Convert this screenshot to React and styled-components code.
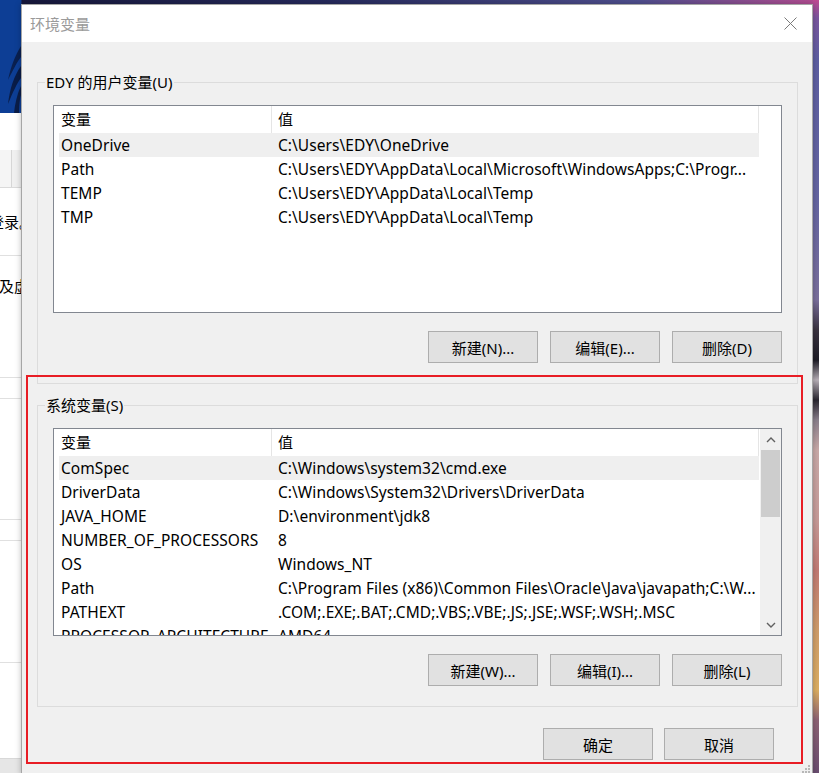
import React from 'react'
import styled, { createGlobalStyle } from 'styled-components'

const GlobalStyle = createGlobalStyle`
  html, body {
    margin: 0;
    padding: 0;
  }
  body {
    width: 819px;
    height: 773px;
    overflow: hidden;
    font-family: "Noto Sans", "Noto Sans CJK SC", sans-serif;
    font-size: 15px;
    color: #000;
  }
  * {
    box-sizing: border-box;
  }
`

const Desktop = styled.div`
  display: flex;
  width: 819px;
  height: 773px;
  overflow: hidden;
  background: linear-gradient(90deg, #0d3a8c 0px, #0d3a8c 21px, #17183c 22px, #262a5c 40%, #4f4f8e 78%, #b54d92 100%);
`

/* ---------- stuff behind the dialog ---------- */

const LeftStrip = styled.div`
  width: 21px;
  flex-shrink: 0;
  display: flex;
  flex-direction: column;
  overflow: hidden;
`

const Palm = styled.svg`
  display: block;
  flex-shrink: 0;
`

const BackWindow = styled.div`
  flex: 1;
  background: #fff;
  display: flex;
  flex-direction: column;
`

const Section = styled.div`
  height: ${p => p.h}px;
  flex-shrink: 0;
  border-bottom: ${p => (p.line ? '1px solid #e0e0e0' : 'none')};
  display: flex;
  justify-content: ${p => (p.end ? 'flex-end' : 'flex-start')};
  align-items: ${p => (p.top ? 'flex-start' : 'center')};
  padding-top: ${p => p.pt || 0}px;
  white-space: nowrap;
  line-height: 20px;
`

const TabBand = styled.div`
  height: 38px;
  flex-shrink: 0;
  background: #f0f0f0;
  border-bottom: 1px solid #dadada;
  display: flex;
`

const TabEdge = styled.div`
  width: 12px;
  border-right: 1px solid #d6d6d6;
  background: #f5f5f5;
`

const Filler = styled.div`
  flex: 1;
`

const BottomBand = styled.div`
  height: 15px;
  flex-shrink: 0;
  background: #e6e6e6;
  border-top: 1px solid #d8d8d8;
`

const Fragment = styled.span`
  margin-right: ${p => p.mr || 0}px;
  margin-left: ${p => p.ml || 0}px;
`

const RightStrip = styled.div`
  flex: 1;
  background: linear-gradient(180deg,
    #c04a92 0px, #7a569e 18px, #5d5ea2 60px, #6565a2 200px, #7a6f9c 300px,
    #3a3340 330px, #1d1c26 360px, #b8b0b8 380px, #2a2630 400px, #8a7f8c 420px,
    #c9a9a8 450px, #c79a98 520px, #c27a74 570px, #cf9c6a 630px, #dcae62 690px,
    #8d6274 720px, #6a4d70 773px);
`

/* ---------- dialog ---------- */

const Dialog = styled.div`
  position: relative;
  width: 792px;
  height: 771px;
  margin-top: 4px;
  flex-shrink: 0;
  border: 1px solid #a6a6a6;
  background: #f0f0f0;
  display: flex;
  flex-direction: column;
  box-shadow: 0 0 6px rgba(0, 0, 0, 0.25);
`

const TitleBar = styled.div`
  height: 37px;
  flex-shrink: 0;
  background: #fff;
  display: flex;
  align-items: center;
  justify-content: space-between;
  padding-left: 8px;
`

const Title = styled.span`
  color: #9a9a9a;
  font-size: 15px;
`

const CloseButton = styled.div`
  width: 44px;
  height: 100%;
  display: flex;
  align-items: center;
  justify-content: center;
`

const Body = styled.div`
  flex: 1;
  padding: 0 14px 0 15px;
  display: flex;
  flex-direction: column;
`

const Group = styled.fieldset`
  margin: ${p => p.mt}px 0 0;
  padding: 13px 15px 20px;
  border: 1px solid #dcdcdc;
  min-width: 0;
`

const Legend = styled.legend`
  margin-left: -8px;
  padding: 0 1px;
  line-height: 20px;
  font-size: 15px;
`

const ListBox = styled.div`
  height: 208px;
  border: 1px solid #828790;
  background: #fff;
  display: flex;
  overflow: hidden;
`

const ListContent = styled.div`
  flex: 1;
  padding-left: 5px;
  overflow: hidden;
`

const HeaderRow = styled.div`
  display: flex;
  height: 27px;
  width: 700px;
`

const HeaderCell = styled.div`
  width: ${p => p.w}px;
  flex-shrink: 0;
  padding-left: ${p => p.pl}px;
  border-right: 1px solid #e5e5e5;
  line-height: 27px;
  white-space: nowrap;
`

const Row = styled.div`
  display: flex;
  height: 24px;
  width: 700px;
  background: ${p => (p.selected ? '#efefef' : 'transparent')};
`

const Cell = styled.div`
  width: ${p => p.w}px;
  flex-shrink: 0;
  padding-left: ${p => p.pl}px;
  font-size: 15.5px;
  letter-spacing: 0.05px;
  line-height: 24px;
  white-space: nowrap;
  overflow: hidden;
  text-overflow: ellipsis;
`

const ScrollBar = styled.div`
  width: 21px;
  flex-shrink: 0;
  background: #f0f0f0;
  display: flex;
  flex-direction: column;
`

const ScrollArrow = styled.div`
  height: 21px;
  flex-shrink: 0;
  display: flex;
  align-items: center;
  justify-content: center;
`

const Thumb = styled.div`
  height: 67px;
  margin: 0 1px;
  background: #cdcdcd;
`

const ButtonRow = styled.div`
  display: flex;
  justify-content: flex-end;
  gap: ${p => p.gap}px;
  margin-top: ${p => p.mt}px;
  padding-right: ${p => p.pr || 0}px;
`

const Button = styled.div`
  width: 110px;
  height: 32px;
  background: #e1e1e1;
  border: 1px solid #adadad;
  display: flex;
  align-items: center;
  justify-content: center;
  font-size: 15px;
  white-space: nowrap;
`

const Annotation = styled.div`
  position: absolute;
  left: 4px;
  top: 370px;
  width: 777px;
  height: 389px;
  border: 2px solid #e81d25;
  pointer-events: none;
`

const Grip = styled.svg`
  position: absolute;
  right: 2px;
  bottom: 1px;
`

const userVars = [
  ['OneDrive', 'C:\\Users\\EDY\\OneDrive'],
  ['Path', 'C:\\Users\\EDY\\AppData\\Local\\Microsoft\\WindowsApps;C:\\Progr...'],
  ['TEMP', 'C:\\Users\\EDY\\AppData\\Local\\Temp'],
  ['TMP', 'C:\\Users\\EDY\\AppData\\Local\\Temp'],
]

const systemVars = [
  ['ComSpec', 'C:\\Windows\\system32\\cmd.exe'],
  ['DriverData', 'C:\\Windows\\System32\\Drivers\\DriverData'],
  ['JAVA_HOME', 'D:\\environment\\jdk8'],
  ['NUMBER_OF_PROCESSORS', '8'],
  ['OS', 'Windows_NT'],
  ['Path', 'C:\\Program Files (x86)\\Common Files\\Oracle\\Java\\javapath;C:\\W...'],
  ['PATHEXT', '.COM;.EXE;.BAT;.CMD;.VBS;.VBE;.JS;.JSE;.WSF;.WSH;.MSC'],
  ['PROCESSOR_ARCHITECTURE', 'AMD64'],
]

const Chevron = ({ up }) => (
  <svg width="10" height="6" viewBox="0 0 10 6">
    <path
      d={up ? 'M1 5 L5 1 L9 5' : 'M1 1 L5 5 L9 1'}
      fill="none"
      stroke="#606060"
      strokeWidth="1.4"
    />
  </svg>
)

const VarList = ({ rows, scroll }) => (
  <ListBox>
    <ListContent>
      <HeaderRow>
        <HeaderCell w={213} pl={2}>变量</HeaderCell>
        <HeaderCell w={487} pl={6}>值</HeaderCell>
      </HeaderRow>
      {rows.map(([name, value], i) => (
        <Row key={name + i} selected={i === 0}>
          <Cell w={213} pl={2}>{name}</Cell>
          <Cell w={487} pl={6}>{value}</Cell>
        </Row>
      ))}
    </ListContent>
    {scroll && (
      <ScrollBar>
        <ScrollArrow><Chevron up /></ScrollArrow>
        <Thumb />
        <Filler />
        <ScrollArrow><Chevron /></ScrollArrow>
      </ScrollBar>
    )}
  </ListBox>
)

const App = () => {
  return (
    <>
      <GlobalStyle />
      <Desktop>
        <LeftStrip>
          <Palm width="21" height="113" viewBox="0 0 21 113">
            <rect width="21" height="113" fill="#0d3e95" />
            <path d="M21 46 C15 56 11 66 8 80 C13 70 17 62 21 57 Z" fill="#0a2050" />
            <path d="M21 66 C14 76 10 88 8 104 C13 92 17 83 21 78 Z" fill="#091c47" />
            <path d="M21 86 C17 94 15 104 14 113 L19 113 C19 104 20 98 21 95 Z" fill="#0a1d48" />
          </Palm>
          <BackWindow>
            <Section h={37} />
            <TabBand>
              <TabEdge />
            </TabBand>
            <Section h={68} line end>
              <Fragment mr={-13}>登录。</Fragment>
            </Section>
            <Section h={122} line top pt={20}>
              <Fragment ml={-1}>及虚拟</Fragment>
            </Section>
            <Section h={21} line />
            <Section h={121} line />
            <Section h={21} line />
            <Section h={122} line />
            <Filler />
            <BottomBand />
          </BackWindow>
        </LeftStrip>

        <Dialog>
          <TitleBar>
            <Title>环境变量</Title>
            <CloseButton>
              <svg width="13" height="13" viewBox="0 0 13 13">
                <path d="M0.5 0.5 L12.5 12.5 M12.5 0.5 L0.5 12.5" stroke="#7a7a7a" strokeWidth="1" />
              </svg>
            </CloseButton>
          </TitleBar>

          <Body>
            <Group mt={30}>
              <Legend>EDY 的用户变量(U)</Legend>
              <VarList rows={userVars} />
              <ButtonRow gap={12} mt={18}>
                <Button>新建(N)...</Button>
                <Button>编辑(E)...</Button>
                <Button>删除(D)</Button>
              </ButtonRow>
            </Group>

            <Group mt={11}>
              <Legend>系统变量(S)</Legend>
              <VarList rows={systemVars} scroll />
              <ButtonRow gap={12} mt={18}>
                <Button>新建(W)...</Button>
                <Button>编辑(I)...</Button>
                <Button>删除(L)</Button>
              </ButtonRow>
            </Group>

            <ButtonRow gap={11} mt={21} pr={24}>
              <Button>确定</Button>
              <Button>取消</Button>
            </ButtonRow>
          </Body>

          <Annotation />
          <Grip width="8" height="8" viewBox="0 0 8 8">
            <rect x="6" y="0" width="2" height="2" fill="#b8b8b8" />
            <rect x="3" y="3" width="2" height="2" fill="#b8b8b8" />
            <rect x="6" y="3" width="2" height="2" fill="#b8b8b8" />
            <rect x="0" y="6" width="2" height="2" fill="#b8b8b8" />
            <rect x="3" y="6" width="2" height="2" fill="#b8b8b8" />
            <rect x="6" y="6" width="2" height="2" fill="#b8b8b8" />
          </Grip>
        </Dialog>

        <RightStrip />
      </Desktop>
    </>
  )
}

export default App
